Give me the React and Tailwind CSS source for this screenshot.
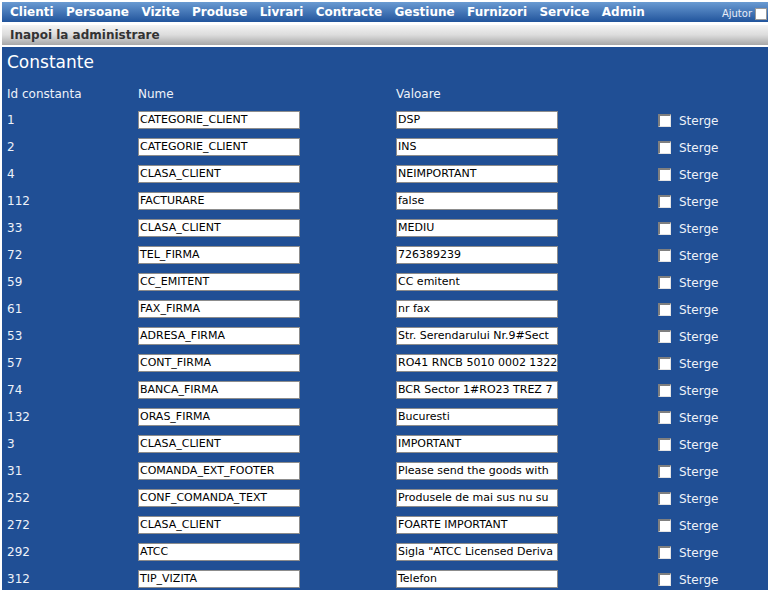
import React from 'react'

const menu = ['Clienti', 'Persoane', 'Vizite', 'Produse', 'Livrari', 'Contracte', 'Gestiune', 'Furnizori', 'Service', 'Admin']

const rows = [
  ['1', 'CATEGORIE_CLIENT', 'DSP'],
  ['2', 'CATEGORIE_CLIENT', 'INS'],
  ['4', 'CLASA_CLIENT', 'NEIMPORTANT'],
  ['112', 'FACTURARE', 'false'],
  ['33', 'CLASA_CLIENT', 'MEDIU'],
  ['72', 'TEL_FIRMA', '726389239'],
  ['59', 'CC_EMITENT', 'CC emitent'],
  ['61', 'FAX_FIRMA', 'nr fax'],
  ['53', 'ADRESA_FIRMA', 'Str. Serendarului Nr.9#Sect'],
  ['57', 'CONT_FIRMA', 'RO41 RNCB 5010 0002 1322'],
  ['74', 'BANCA_FIRMA', 'BCR Sector 1#RO23 TREZ 7'],
  ['132', 'ORAS_FIRMA', 'Bucuresti'],
  ['3', 'CLASA_CLIENT', 'IMPORTANT'],
  ['31', 'COMANDA_EXT_FOOTER', 'Please send the goods with'],
  ['252', 'CONF_COMANDA_TEXT', 'Produsele de mai sus nu su'],
  ['272', 'CLASA_CLIENT', 'FOARTE IMPORTANT'],
  ['292', 'ATCC', 'Sigla "ATCC Licensed Deriva'],
  ['312', 'TIP_VIZITA', 'Telefon'],
]

function Box() {
  return <span className="block w-[13px] h-[13px] bg-white border-l-2 border-t-2 border-[#7f7f7f] border-r border-b border-r-[#e4e4e4] border-b-[#e4e4e4]" />
}

function Field({ value }) {
  return (
    <div className="w-[162px] h-[18px] bg-white border border-[#8c8c8c] px-[1px] text-[11px] leading-[16px] text-black overflow-hidden whitespace-nowrap">
      {value}
    </div>
  )
}

export default function App() {
  return (
    <div className="min-h-[590px] bg-white pt-[2px] pl-[2px] pr-[3px] font-['DejaVu_Sans',Verdana,sans-serif]">
      {/* top menu */}
      <div className="h-[20px] flex items-center bg-gradient-to-b from-[#6a9bd2] to-[#21549c]">
        <nav className="flex items-center gap-[12.4px] pl-[8px] text-[12px] font-bold text-white">
          {menu.map(m => <span key={m}>{m}</span>)}
        </nav>
        <div className="ml-auto flex items-center gap-[3px] pr-[1px] pt-[3px]">
          <span className="text-[10px] text-[#e8eef8]">Ajutor</span>
          <span className="block w-[12px] h-[12px] bg-white border border-[#9a9a9a]" />
        </div>
      </div>

      {/* back bar */}
      <div className="mt-[3px] h-[20px] flex items-center pl-[8px] bg-gradient-to-b from-[#f4f4f4] via-[#dcdcdc] to-[#a8a8a8] text-[12px] font-bold text-[#333]">
        Inapoi la administrare
      </div>

      {/* content */}
      <div className="mt-[2px] bg-[#204f95] text-[#eef2f9] pl-[5px] pt-[4px] pb-[4px]">
        <h1 className="text-[17px] leading-[22px] text-white">Constante</h1>
        <div className="grid grid-cols-[131px_258px_262px_1fr] text-[12px] mt-[11px]">
          <div className="h-[22px] leading-[20px]">Id constanta</div>
          <div className="h-[22px] leading-[20px]">Nume</div>
          <div className="h-[22px] leading-[20px]">Valoare</div>
          <div />
          {rows.map(([id, name, val]) => (
            <React.Fragment key={id}>
              <div className="h-[27px] flex items-center">{id}</div>
              <div className="h-[27px] flex items-center"><Field value={name} /></div>
              <div className="h-[27px] flex items-center"><Field value={val} /></div>
              <div className="h-[27px] flex items-center gap-[8px] pt-[1px]">
                <Box />
                <span className="pt-[2px]">Sterge</span>
              </div>
            </React.Fragment>
          ))}
        </div>
      </div>
    </div>
  )
}
